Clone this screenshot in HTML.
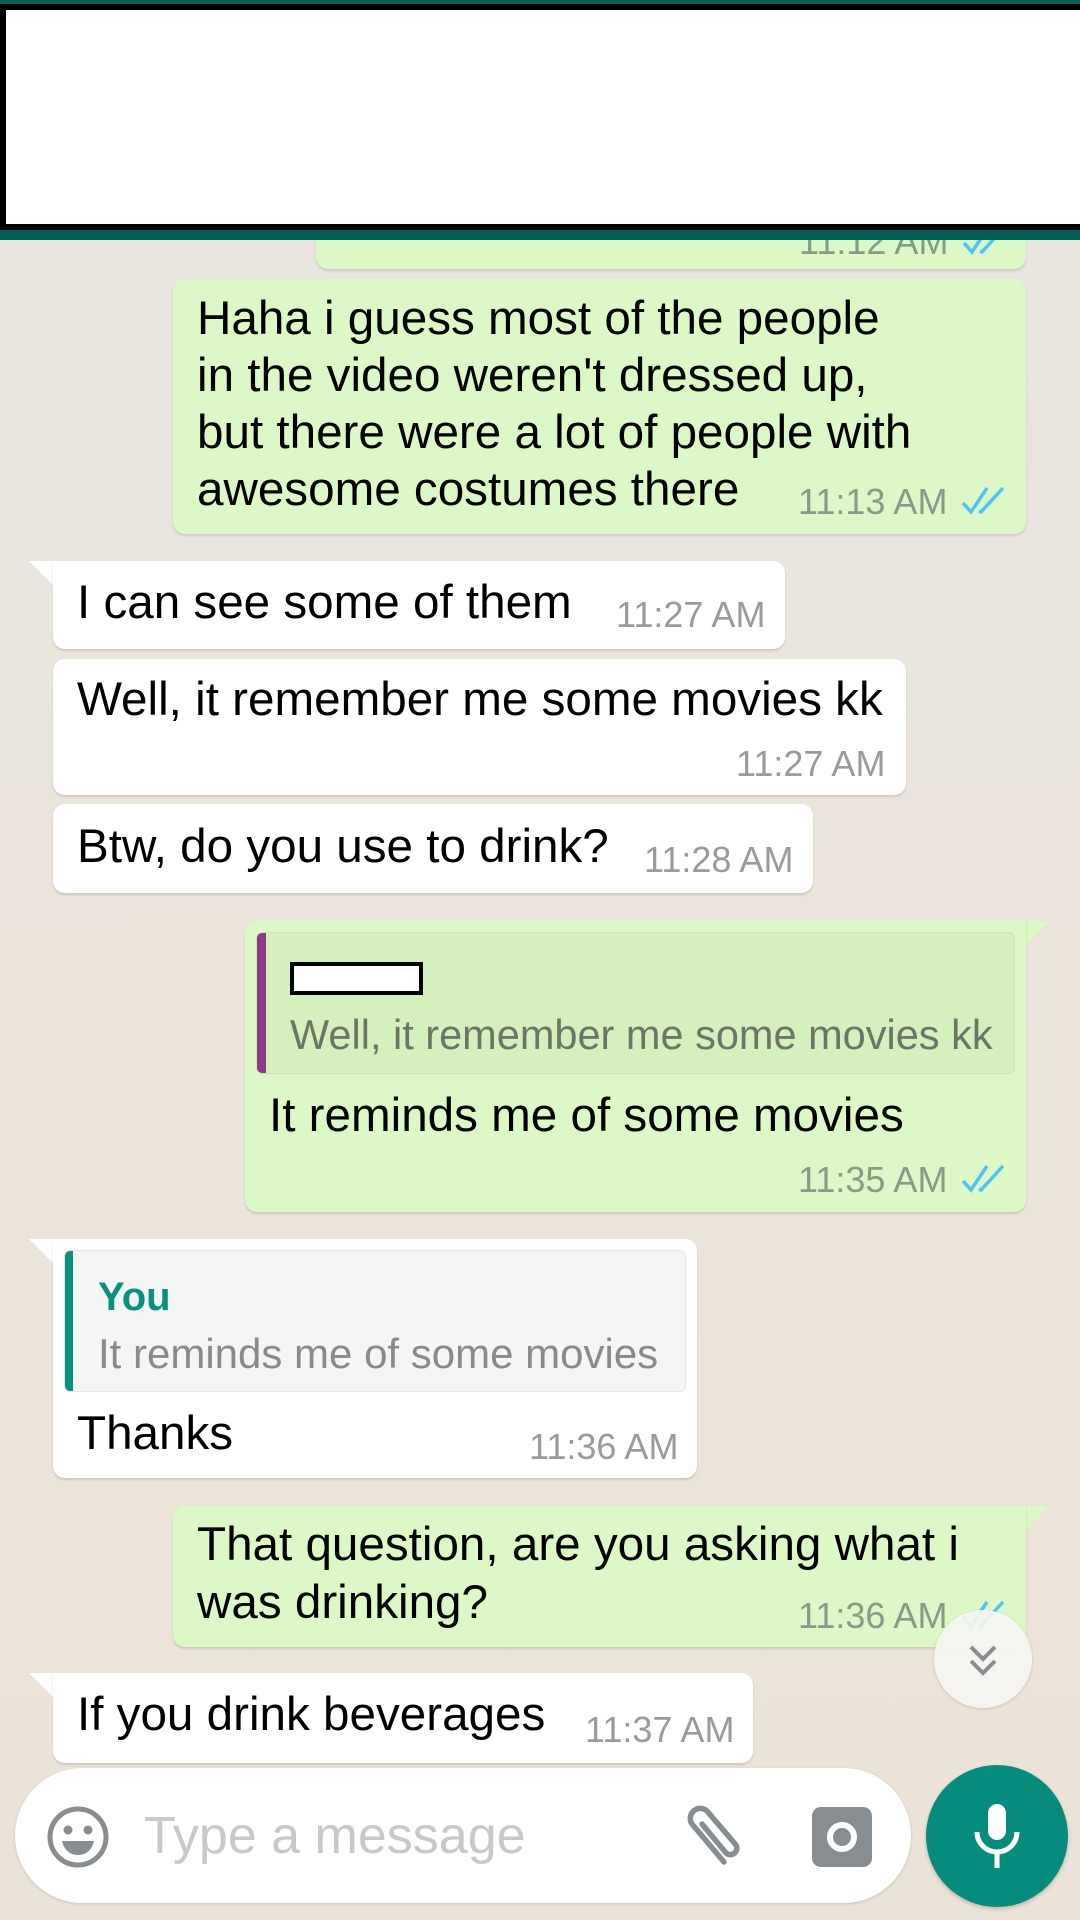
<!DOCTYPE html>
<html><head><meta charset="utf-8"><style>
*{margin:0;padding:0;box-sizing:border-box}
body{width:1080px;height:1920px;overflow:hidden;position:relative;font-family:"Liberation Sans",Arial,sans-serif;background:linear-gradient(#e8e6e1,#ebe4da 60%,#ece3d8)}
.a{position:absolute;white-space:nowrap}
.b{position:absolute;border-radius:12px;box-shadow:0 2px 2px rgba(0,0,0,.13)}
.in{background:#fff}.out{background:#dcf8c6}
.t{position:absolute;white-space:nowrap;font-size:47.6px;line-height:57px;color:#000}
.tm{position:absolute;white-space:nowrap;font-size:36px;line-height:40px;color:#8a9a86}
.in .tm{color:#9a9a9a}
.tail{position:absolute;width:30px;height:30px}
</style></head><body>

<!-- partial top bubble -->
<div class="b out" style="left:316px;top:200px;width:710px;height:69px;overflow:hidden">
 <div class="tm" style="left:483px;top:22px">11:12 AM</div>
 <svg class="a" style="left:646px;top:25px" width="46" height="32" viewBox="0 0 46 32"><path d="M2 18l8 9L26 3M18 26l2 1L42 3" fill="none" stroke="#4fc3f7" stroke-width="3.5"/></svg>
</div>

<!-- header -->
<div class="a" style="left:0;top:0;width:1080px;height:240px;background:#075e54"></div>
<div class="a" style="left:0;top:4px;width:1080px;height:226px;background:#000"></div>
<div class="a" style="left:6px;top:10px;width:1074px;height:214px;background:#fff"></div>

<!-- Haha bubble -->
<div class="b out" style="left:173px;top:279px;width:853px;height:255px">
 <div class="t" style="left:24px;top:11px">Haha i guess most of the people</div>
 <div class="t" style="left:24px;top:68px">in the video weren't dressed up,</div>
 <div class="t" style="left:24px;top:125px">but there were a lot of people with</div>
 <div class="t" style="left:24px;top:182px">awesome costumes there</div>
 <div class="tm" style="left:625px;top:203px">11:13 AM</div>
 <svg class="a" style="left:788px;top:206px" width="46" height="32" viewBox="0 0 46 32"><path d="M2 18l8 9L26 3M18 26l2 1L42 3" fill="none" stroke="#4fc3f7" stroke-width="3.5"/></svg>
</div>

<!-- I can see -->
<svg class="tail" style="left:29px;top:561px" viewBox="0 0 30 30"><polygon points="0,0 30,0 30,30" fill="#fff"/></svg>
<div class="b in" style="left:53px;top:561px;width:732px;height:88px;border-top-left-radius:0">
 <div class="t" style="left:24px;top:13px">I can see some of them</div>
 <div class="tm" style="left:563px;top:34px">11:27 AM</div>
</div>

<div class="b in" style="left:53px;top:659px;width:853px;height:136px">
 <div class="t" style="left:24px;top:12px">Well, it remember me some movies kk</div>
 <div class="tm" style="left:683px;top:85px">11:27 AM</div>
</div>

<div class="b in" style="left:53px;top:804px;width:760px;height:89px">
 <div class="t" style="left:24px;top:14px">Btw, do you use to drink?</div>
 <div class="tm" style="left:591px;top:36px">11:28 AM</div>
</div>

<!-- outgoing reply -->
<svg class="tail" style="left:1020px;top:921px" viewBox="0 0 30 30"><polygon points="0,0 30,0 0,30" fill="#dcf8c6"/></svg>
<div class="b out" style="left:245px;top:921px;width:781px;height:291px;border-top-right-radius:0">
 <div class="a" style="left:11px;top:11px;width:759px;height:142px;background:#d3f0bd;border-radius:6px;overflow:hidden;border:1px solid #cde6b8">
  <div class="a" style="left:0;top:0;width:9px;height:142px;background:#8e3a8a"></div>
  <div class="a" style="left:33px;top:29px;width:133px;height:33px;background:#fff;border:4px solid #000"></div>
  <div class="a" style="left:33px;top:78px;font-size:41.5px;line-height:48px;color:#6b7764">Well, it remember me some movies kk</div>
 </div>
 <div class="t" style="left:24px;top:166px">It reminds me of some movies</div>
 <div class="tm" style="left:553px;top:239px">11:35 AM</div>
 <svg class="a" style="left:716px;top:242px" width="46" height="32" viewBox="0 0 46 32"><path d="M2 18l8 9L26 3M18 26l2 1L42 3" fill="none" stroke="#4fc3f7" stroke-width="3.5"/></svg>
</div>

<!-- incoming reply -->
<svg class="tail" style="left:29px;top:1239px" viewBox="0 0 30 30"><polygon points="0,0 30,0 30,30" fill="#fff"/></svg>
<div class="b in" style="left:53px;top:1239px;width:644px;height:239px;border-top-left-radius:0">
 <div class="a" style="left:11px;top:11px;width:622px;height:142px;background:#f5f5f5;border-radius:6px;overflow:hidden;border:1px solid #e8e8e8">
  <div class="a" style="left:0;top:0;width:8px;height:142px;background:#07927f"></div>
  <div class="a" style="left:33px;top:23px;font-size:40px;line-height:46px;color:#07927f;font-weight:bold">You</div>
  <div class="a" style="left:33px;top:80px;font-size:42px;line-height:46px;color:#8a8a8a">It reminds me of some movies</div>
 </div>
 <div class="t" style="left:24px;top:166px">Thanks</div>
 <div class="tm" style="left:476px;top:188px">11:36 AM</div>
</div>

<!-- That question -->
<svg class="tail" style="left:1020px;top:1506px" viewBox="0 0 30 30"><polygon points="0,0 30,0 0,30" fill="#dcf8c6"/></svg>
<div class="b out" style="left:173px;top:1506px;width:853px;height:141px;border-top-right-radius:0">
 <div class="t" style="left:24px;top:10px">That question, are you asking what i</div>
 <div class="t" style="left:24px;top:68px">was drinking?</div>
 <div class="tm" style="left:625px;top:90px">11:36 AM</div>
 <svg class="a" style="left:788px;top:93px" width="46" height="32" viewBox="0 0 46 32"><path d="M2 18l8 9L26 3M18 26l2 1L42 3" fill="none" stroke="#4fc3f7" stroke-width="3.5"/></svg>
</div>

<!-- scroll down button -->
<div class="a" style="left:934px;top:1610px;width:98px;height:98px;border-radius:50%;background:rgba(245,245,243,.92);box-shadow:0 1px 3px rgba(0,0,0,.15)"></div>
<svg class="a" style="left:963px;top:1643px" width="40" height="36" viewBox="0 0 40 36"><path d="M8 4l12 12L32 4M8 18l12 12 12-12" fill="none" stroke="#888d91" stroke-width="4"/></svg>

<!-- If you drink -->
<svg class="tail" style="left:29px;top:1673px" viewBox="0 0 30 30"><polygon points="0,0 30,0 30,30" fill="#fff"/></svg>
<div class="b in" style="left:53px;top:1673px;width:700px;height:90px;border-top-left-radius:0">
 <div class="t" style="left:24px;top:13px">If you drink beverages</div>
 <div class="tm" style="left:532px;top:37px">11:37 AM</div>
</div>

<!-- input bar -->
<div class="a" style="left:15px;top:1768px;width:896px;height:135px;border-radius:68px;background:#fff;box-shadow:0 1px 3px rgba(0,0,0,.15)"></div>
<svg class="a" style="left:46px;top:1805px" width="64" height="64" viewBox="0 0 64 64"><circle cx="32" cy="32" r="28" fill="none" stroke="#888d91" stroke-width="5"/><circle cx="22" cy="25" r="4.5" fill="#888d91"/><circle cx="42" cy="25" r="4.5" fill="#888d91"/><path d="M16 36h32c-2 9-8 14-16 14s-14-5-16-14z" fill="#888d91"/></svg>
<div class="a" style="left:144px;top:1806px;font-size:52px;line-height:60px;color:#c8c8c8">Type a message</div>
<svg class="a" style="left:672px;top:1800px" width="76" height="76" viewBox="0 0 76 76"><path d="M52 62L20 24a10 10 0 0 1 15-13l29 34a6.5 6.5 0 0 1-10 8L30 24" fill="none" stroke="#888d91" stroke-width="5.5" stroke-linecap="round"/></svg>
<div class="a" style="left:812px;top:1807px;width:60px;height:60px;border-radius:9px;background:#888d91"></div>
<div class="a" style="left:827px;top:1822px;width:30px;height:30px;border-radius:50%;border:6px solid #fff"></div>

<div class="a" style="left:926px;top:1765px;width:142px;height:142px;border-radius:50%;background:#068c7c;box-shadow:0 2px 4px rgba(0,0,0,.2)"></div>
<svg class="a" style="left:967px;top:1800px" width="60" height="72" viewBox="0 0 60 72"><rect x="21" y="4" width="18" height="36" rx="9" fill="#fff"/><path d="M10 32a20 20 0 0 0 40 0" fill="none" stroke="#fff" stroke-width="5"/><path d="M30 52v16" stroke="#fff" stroke-width="5"/></svg>

</body></html>
